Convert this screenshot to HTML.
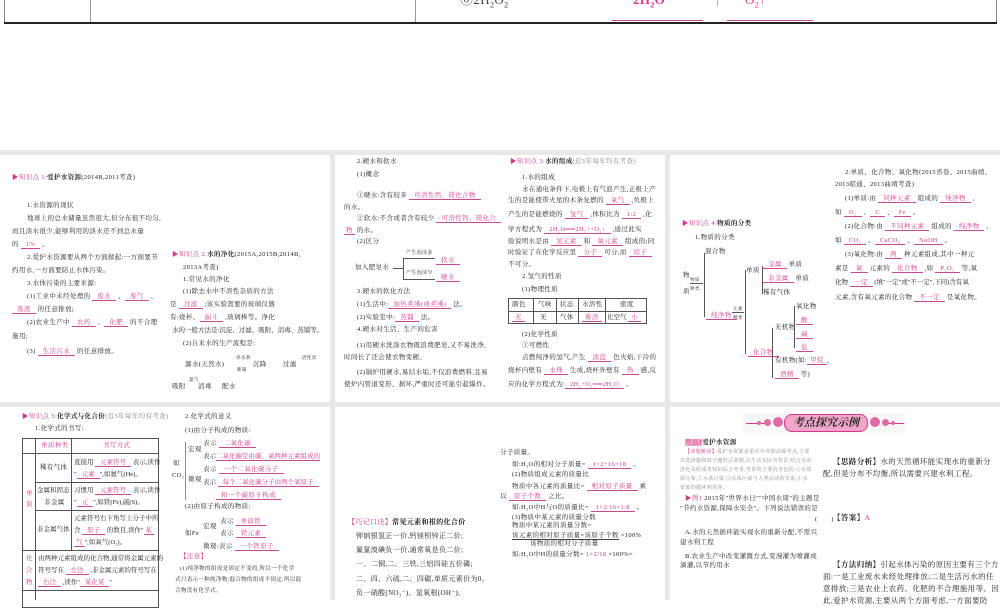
<!DOCTYPE html>
<html><head><meta charset="utf-8">
<style>
body{margin:0;width:1000px;height:600px;overflow:hidden;background:#fff;position:relative;font-family:"Liberation Serif","Noto Serif CJK SC","Noto Sans CJK SC",serif;}
.g{position:absolute;background:#e8e8e8}
.t{position:absolute;font-size:6.5px;white-space:nowrap;color:#222;line-height:8px;letter-spacing:0.35px}
.p{color:#d2388c;border-bottom:0.6px solid #c84a92;padding:0 5px}
.h{color:#d2388c}
.ln{position:absolute;background:#555}
.pk{position:absolute;background:#c84a92}
.r{font-size:7.5px!important;line-height:10px!important;letter-spacing:0.4px!important}
</style></head><body>
<div class="ln" style="left:4px;top:0;width:1px;height:23px;background:#888"></div>
<div class="ln" style="left:90px;top:0;width:1px;height:23px;background:#999"></div>
<div class="ln" style="left:415px;top:0;width:1px;height:23px;background:#999"></div>
<div class="ln" style="left:996px;top:0;width:1px;height:23px;background:#888"></div>
<div class="ln" style="left:4px;top:22px;width:993px;height:2px;background:#222"></div>
<div class="t" style="left:460px;top:-7px;font-size:13px;line-height:14px;color:#444">⑥2H<sub style="font-size:8px">2</sub>O<sub style="font-size:8px">2</sub></div>
<div class="t" style="left:633px;top:-7px;font-size:13px;line-height:14px;color:#d2388c;font-weight:bold">2H<sub style="font-size:8px">2</sub>O</div>
<div class="t" style="left:716px;top:-7px;font-size:13px;line-height:14px;color:#888">|</div>
<div class="t" style="left:745px;top:-7px;font-size:13px;line-height:14px;color:#d2388c">O<sub style="font-size:8px">2</sub>↑</div>
<div class="pk" style="left:612px;top:20px;width:91px;height:1px"></div>
<div class="pk" style="left:727px;top:20px;width:86px;height:1px"></div>

<div class="g" style="left:0;top:150px;width:1000px;height:5px"></div>
<div class="g" style="left:0;top:402px;width:1000px;height:5px"></div>
<div class="g" style="left:330px;top:150px;width:5px;height:450px"></div>
<div class="g" style="left:665px;top:150px;width:5px;height:450px"></div>

<!-- Slide 1 -->
<div class="t" style="left:12px;top:174px"><span class="h">▶知识点 1:</span><b>爱护水资源</b>(2014B,2011考查)</div>
<div class="t" style="left:27px;top:202px">1.水资源的现状</div>
<div class="t" style="left:27px;top:215px">地球上的总水储量虽然很大,但分布很不均匀,</div>
<div class="t" style="left:12px;top:228px">而且淡水很少,能够利用的淡水还不到总水量</div>
<div class="t" style="left:12px;top:241px">的 <span class="p">1%</span> 。</div>
<div class="t" style="left:27px;top:254px">2.爱护水资源要从两个方面做起:一方面要节</div>
<div class="t" style="left:12px;top:267px">约用水,一方面要防止水体污染。</div>
<div class="t" style="left:27px;top:280px">3.水体污染的主要来源:</div>
<div class="t" style="left:27px;top:293px">(1)工业中未经处理的 <span class="p">废水</span> 、<span class="p">废气</span> 、</div>
<div class="t" style="left:12px;top:306px"><span class="p">废渣</span> 的任意排放;</div>
<div class="t" style="left:27px;top:319px">(2)农业生产中 <span class="p">农药</span> 、<span class="p">化肥</span> 的不合理</div>
<div class="t" style="left:12px;top:333px">施用;</div>
<div class="t" style="left:27px;top:348px">(3) <span class="p">生活污水</span> 的任意排放。</div>
<div class="t" style="left:172px;top:251px"><span class="h">▶知识点 2:</span><b>水的净化</b>(2015A,2015B,2014B,</div>
<div class="t" style="left:183px;top:264px">2013A考查)</div>
<div class="t" style="left:183px;top:276px">1.常见水的净化</div>
<div class="t" style="left:183px;top:288px">(1)除去水中不溶性杂质的方法</div>
<div class="t" style="left:170px;top:301px">是 <span class="p">过滤</span> ;该实验需要的玻璃仪器</div>
<div class="t" style="left:170px;top:314px">有:烧杯、<span class="p">漏斗</span> ,玻璃棒等。净化</div>
<div class="t" style="left:172px;top:327px;letter-spacing:0">水的一般方法是:沉淀、过滤、吸附、消毒、蒸馏等。</div>
<div class="t" style="left:183px;top:340px">(2)自来水的生产流程是:</div>
<div class="t" style="left:185px;top:361px">源水(天然水)</div>
<div class="t" style="left:236px;top:354px;font-size:4.5px">净水剂</div>
<div class="t" style="left:237px;top:366px;font-size:4.5px">絮凝</div>
<div class="t" style="left:253px;top:361px">沉降</div>
<div class="t" style="left:283px;top:361px">过滤</div>
<div class="t" style="left:302px;top:354px;font-size:4.5px">活性炭</div>
<div class="t" style="left:172px;top:383px">吸附</div>
<div class="t" style="left:189px;top:376px;font-size:4.5px">氯气</div>
<div class="t" style="left:198px;top:383px">消毒</div>
<div class="t" style="left:222px;top:383px">配水</div>

<!-- Slide 2 -->
<div class="t" style="left:357px;top:158px">2.硬水和软水</div>
<div class="t" style="left:357px;top:171px">(1)概念</div>
<div class="t" style="left:357px;top:192px">①硬水:含有较多 <span class="p">可溶性钙、镁化合物</span></div>
<div class="t" style="left:344px;top:204px">的水。</div>
<div class="t" style="left:357px;top:215px">②软水:不含或者含有较少 <span class="p">可溶性钙、镁化合</span></div>
<div class="t" style="left:344px;top:227px"><span class="p" style="padding:0 2px">物</span> 的水。</div>
<div class="t" style="left:357px;top:238px">(2)区分</div>
<div class="t" style="left:355px;top:264px">加入肥皂水</div>
<div class="ln" style="left:393px;top:268px;width:10px;height:0.7px"></div>
<div class="ln" style="left:403px;top:258px;width:0.7px;height:21px"></div>
<div class="ln" style="left:403px;top:258px;width:32px;height:0.7px"></div>
<div class="ln" style="left:403px;top:279px;width:32px;height:0.7px"></div>
<div class="t" style="left:406px;top:250px;font-size:5px">产生泡沫多</div>
<div class="t" style="left:406px;top:270px;font-size:5px">产生泡沫少</div>
<div class="t" style="left:436px;top:257px"><span class="p">软水</span></div>
<div class="t" style="left:436px;top:274px"><span class="p">硬水</span></div>
<div class="t" style="left:357px;top:288px">3.硬水的软化方法</div>
<div class="t" style="left:357px;top:301px">(1)生活中:<span class="p">加热煮沸(或煮沸)</span> 法。</div>
<div class="t" style="left:357px;top:314px">(2)实验室中:<span class="p">蒸馏</span> 法。</div>
<div class="t" style="left:357px;top:326px">4.硬水对生活、生产的危害</div>
<div class="t" style="left:357px;top:342px">(1)用硬水洗涤衣物既浪费肥皂,又不易洗净,</div>
<div class="t" style="left:344px;top:354px">时间长了还会使衣物变硬。</div>
<div class="t" style="left:357px;top:369px">(2)锅炉用硬水,易结水垢,不仅浪费燃料,且易</div>
<div class="t" style="left:344px;top:381px">使炉内管道变形、损坏,严重时还可能引起爆炸。</div>

<div class="t" style="left:510px;top:158px"><span class="h">▶知识点 3:</span><b>水的组成</b><span style="color:#888">(近5年每年均有考查)</span></div>
<div class="t" style="left:522px;top:174px">1.水的组成</div>
<div class="t" style="left:522px;top:186px">水在通电条件下,电极上有气泡产生,正极上产</div>
<div class="t" style="left:508px;top:197px">生的是能使带火星的木条复燃的 <span class="p">氧气</span> ,负极上</div>
<div class="t" style="left:508px;top:211px">产生的是能燃烧的 <span class="p">氢气</span> ,体积比为 <span class="p">1:2</span> ,化</div>
<div class="t" style="left:508px;top:226px">学方程式为 <span class="p">2H₂O══2H₂↑+O₂↑</span> ,通过此实</div>
<div class="t" style="left:508px;top:238px">验说明水是由 <span class="p">氢元素</span> 和 <span class="p">氧元素</span> 组成的;同</div>
<div class="t" style="left:508px;top:249px">时验证了在化学反应里 <span class="p">分子</span> 可分,而 <span class="p">原子</span></div>
<div class="t" style="left:508px;top:261px">不可分。</div>
<div class="t" style="left:522px;top:273px">2.氢气的性质</div>
<div class="t" style="left:522px;top:286px">(1)物理性质</div>
<div style="position:absolute;left:508px;top:298px;width:139px;height:26px;border:0.8px solid #555;box-sizing:border-box"></div>
<div class="ln" style="left:508px;top:311px;width:139px;height:0.7px"></div>
<div class="ln" style="left:533px;top:298px;width:0.7px;height:26px"></div>
<div class="ln" style="left:556px;top:298px;width:0.7px;height:26px"></div>
<div class="ln" style="left:578px;top:298px;width:0.7px;height:26px"></div>
<div class="ln" style="left:605px;top:298px;width:0.7px;height:26px"></div>
<div class="t" style="left:512px;top:301px">颜色</div><div class="t" style="left:538px;top:301px">气味</div><div class="t" style="left:560px;top:301px">状态</div><div class="t" style="left:582px;top:301px">水溶性</div><div class="t" style="left:620px;top:301px">密度</div>
<div class="t" style="left:512px;top:314px"><span class="p" style="padding:0 3px">无</span></div><div class="t" style="left:540px;top:314px">无</div><div class="t" style="left:560px;top:314px">气体</div><div class="t" style="left:582px;top:314px"><span class="p" style="padding:0 3px">难溶</span></div><div class="t" style="left:607px;top:314px;letter-spacing:0">比空气 <span class="p" style="padding:0 3px">小</span></div>
<div class="t" style="left:522px;top:331px">(2)化学性质</div>
<div class="t" style="left:522px;top:342px">①可燃性</div>
<div class="t" style="left:522px;top:354px">点燃纯净的氢气,产生 <span class="p">淡蓝</span> 色火焰,干冷的</div>
<div class="t" style="left:508px;top:367px">烧杯内壁有 <span class="p">水珠</span> 生成,烧杯外壁有 <span class="p">热</span> 感,反</div>
<div class="t" style="left:508px;top:381px">应的化学方程式为:<span class="p">2H₂+O₂══2H₂O</span> 。</div>

<!-- Slide 3 -->
<div class="t" style="left:682px;top:220px"><span class="h">▶知识点 4:</span><b>物质的分类</b></div>
<div class="t" style="left:695px;top:234px">1.物质的分类</div>
<div class="t" style="left:705px;top:248px">混合物</div>
<div class="t" style="left:683px;top:272px">物</div><div class="t" style="left:683px;top:288px">质</div>
<div class="t" style="left:690px;top:276px;font-size:4.5px">物质</div>
<div class="ln" style="left:690px;top:283px;width:13px;height:0.6px"></div>
<div class="t" style="left:690px;top:285px;font-size:4.5px">种类</div>
<div class="ln" style="left:704px;top:253px;width:0.7px;height:64px"></div>
<div class="t" style="left:706px;top:312px"><span class="p">纯净物</span></div>
<div class="t" style="left:733px;top:305px;font-size:4.5px">元素</div>
<div class="ln" style="left:732px;top:312px;width:12px;height:0.6px"></div>
<div class="t" style="left:733px;top:314px;font-size:4.5px">种类</div>
<div class="ln" style="left:745px;top:270px;width:0.7px;height:84px"></div>
<div class="t" style="left:746px;top:267px">单质</div>
<div class="ln" style="left:762px;top:266px;width:0.7px;height:28px"></div>
<div class="t" style="left:763px;top:261px"><span class="p">金属</span> 单质</div>
<div class="t" style="left:763px;top:275px"><span class="p">非金属</span> 单质</div>
<div class="t" style="left:763px;top:289px">稀有气体</div>
<div class="t" style="left:748px;top:349px"><span class="p">化合物</span></div>
<div class="ln" style="left:772px;top:328px;width:0.7px;height:50px"></div>
<div class="t" style="left:775px;top:324px">无机物</div>
<div class="ln" style="left:794px;top:306px;width:0.7px;height:42px"></div>
<div class="t" style="left:796px;top:303px">氧化物</div>
<div class="t" style="left:796px;top:317px"><span class="p">酸</span></div>
<div class="t" style="left:796px;top:331px"><span class="p">碱</span></div>
<div class="t" style="left:796px;top:344px"><span class="p">盐</span></div>
<div class="t" style="left:775px;top:357px">有机物(如:<span class="p" style="padding:0 3px">甲烷</span>、</div>
<div class="t" style="left:775px;top:371px"><span class="p">酒精</span> 等)</div>
<div class="t" style="left:845px;top:169px">2.单质、化合物、氧化物(2015省卷、2015曲靖、</div>
<div class="t" style="left:835px;top:181px">2013昭通、2013曲靖考查)</div>
<div class="t" style="left:845px;top:195px">(1)单质:由 <span class="p">同种元素</span> 组成的 <span class="p">纯净物</span> ,</div>
<div class="t" style="left:835px;top:209px">如 <span class="p">O₂</span> 、<span class="p">C</span> 、<span class="p">Fe</span> 。</div>
<div class="t" style="left:845px;top:223px">(2)化合物:由 <span class="p">不同种元素</span> 组成的 <span class="p">纯净物</span> ,</div>
<div class="t" style="left:835px;top:237px">如 <span class="p">CO₂</span> 、<span class="p">CaCO₃</span> 、<span class="p">NaOH</span> 。</div>
<div class="t" style="left:845px;top:251px">(3)氧化物:由 <span class="p">两</span> 种元素组成,其中一种元</div>
<div class="t" style="left:835px;top:265px">素是 <span class="p">氧</span> 元素的 <span class="p">化合物</span> ,如 <span class="p">P₂O₅</span> 等,氧</div>
<div class="t" style="left:835px;top:279px;letter-spacing:0">化物 <span class="p">一定</span> (填"一定"或"不一定",下同)含有氧</div>
<div class="t" style="left:835px;top:294px">元素,含有氧元素的化合物 <span class="p">不一定</span> 是氧化物。</div>

<!-- Slide 4 -->
<div class="t" style="left:22px;top:413px"><span class="h">▶知识点 5:</span><b>化学式与化合价</b><span style="color:#888">(近5年每年均有考查)</span></div>
<div class="t" style="left:35px;top:425px">1.化学式的书写:</div>
<div style="position:absolute;left:22px;top:438px;width:137px;height:170px;border:0.8px solid #555;box-sizing:border-box"></div>
<div class="ln" style="left:35px;top:438px;width:0.7px;height:162px"></div>
<div class="ln" style="left:71px;top:438px;width:0.7px;height:112px"></div>
<div class="ln" style="left:22px;top:453px;width:137px;height:0.7px"></div>
<div class="ln" style="left:35px;top:482px;width:124px;height:0.7px"></div>
<div class="ln" style="left:35px;top:510px;width:124px;height:0.7px"></div>
<div class="ln" style="left:22px;top:550px;width:137px;height:0.7px"></div>
<div class="ln" style="left:22px;top:590px;width:137px;height:1px"></div>
<div class="t h" style="left:41px;top:442px">单质种类</div>
<div class="t h" style="left:103px;top:442px">书写方式</div>
<div class="t h" style="left:26px;top:488px;line-height:11px;white-space:normal;width:8px">单<br>质</div>
<div class="t" style="left:40px;top:464px">稀有气体</div>
<div class="t" style="left:74px;top:459px;letter-spacing:0">直接用 <span class="p">元素符号</span> 表示,读作</div>
<div class="t" style="left:74px;top:471px;letter-spacing:0">"<span class="p">元素</span>",如氦气(He)。</div>
<div class="t" style="left:37px;top:487px;letter-spacing:0">金属和固态</div>
<div class="t" style="left:44px;top:499px">非金属</div>
<div class="t" style="left:74px;top:487px;letter-spacing:0">习惯用 <span class="p">元素符号</span> 表示,读作</div>
<div class="t" style="left:74px;top:499px;letter-spacing:0">"<span class="p">元</span>",如铁(Fe),硫(S)。</div>
<div class="t" style="left:37px;top:526px;letter-spacing:0">非金属气体</div>
<div class="t" style="left:74px;top:515px;letter-spacing:0">元素符号右下角写上分子中所</div>
<div class="t" style="left:74px;top:527px;letter-spacing:0">含 <span class="p">原子</span> 的数目,读作"<span class="p" style="padding:0 2px">某</span></div>
<div class="t" style="left:74px;top:539px;letter-spacing:0"><span class="p" style="padding:0 2px">气</span>",如氧气(O₂)。</div>
<div class="t h" style="left:26px;top:553px;line-height:12px;white-space:normal;width:8px">化<br>合<br>物</div>
<div class="t" style="left:38px;top:555px;letter-spacing:0">由两种元素组成的化合物,通常将金属元素的</div>
<div class="t" style="left:38px;top:567px;letter-spacing:0">符号写在 <span class="p">左边</span> ,非金属元素的符号写在</div>
<div class="t" style="left:38px;top:579px;letter-spacing:0"><span class="p">右边</span> ,读作"<span class="p">某化某</span>"</div>

<div class="t" style="left:185px;top:413px">2.化学式的意义</div>
<div class="t" style="left:185px;top:427px">(1)由分子构成的物质:</div>
<div class="t" style="left:173px;top:460px">如</div>
<div class="t" style="left:172px;top:472px">CO₂</div>
<div class="ln" style="left:185px;top:442px;width:0.7px;height:58px;background:#888"></div>
<div class="t" style="left:188px;top:446px">宏观</div>
<div class="t" style="left:188px;top:476px">微观</div>
<div class="t" style="left:203px;top:440px">表示 <span class="p">二氧化碳</span></div>
<div class="t" style="left:203px;top:453px;letter-spacing:0">表示<span class="p" style="padding:0">二氧化碳是由碳、氧两种元素组成的</span></div>
<div class="t" style="left:203px;top:466px">表示 <span class="p">一个二氧化碳分子</span></div>
<div class="t" style="left:203px;top:479px;letter-spacing:0">表示 <span class="p">每个二氧化碳分子由两个氧原子</span></div>
<div class="t" style="left:216px;top:492px"><span class="p">和一个碳原子构成</span></div>
<div class="t" style="left:185px;top:503px">(2)由原子构成的物质:</div>
<div class="t" style="left:185px;top:530px">如Fe</div>
<div class="t" style="left:203px;top:523px">宏观</div>
<div class="t" style="left:220px;top:518px">表示 <span class="p">单质铁</span></div>
<div class="t" style="left:220px;top:530px">表示 <span class="p">铁元素</span></div>
<div class="t" style="left:203px;top:543px">微观:表示 <span class="p">一个铁原子</span></div>
<div class="t h" style="left:180px;top:553px">【注意】</div>
<div class="t" style="left:180px;top:565px;font-size:5.5px">(1)纯净物的组成是固定不变的,所以一个化学</div>
<div class="t" style="left:175px;top:576px;font-size:5.5px">式只表示一种纯净物;混合物的组成不固定,所以混</div>
<div class="t" style="left:175px;top:587px;font-size:5.5px">合物没有化学式。</div>

<!-- Slide 5 -->
<div class="t" style="left:348px;top:518px;font-size:7px"><span class="h">【巧记口诀】</span><b>常见元素和根的化合价</b></div>
<div class="t" style="left:356px;top:532px;font-size:7px">钾钠银氢正一价,钙镁钡锌正二价;</div>
<div class="t" style="left:356px;top:546px;font-size:7px">氟氯溴碘负一价,通常氧是负二价;</div>
<div class="t" style="left:356px;top:560px;font-size:7px">一、二铜,二、三铁,三铝四硅五价磷;</div>
<div class="t" style="left:356px;top:575px;font-size:7px">二、四、六硫,二、四碳,单质元素价为0。</div>
<div class="t" style="left:356px;top:589px;font-size:7px">负一硝酸(NO₃⁻)、氢氧根(OH⁻);</div>
<div class="t" style="left:500px;top:449px">分子质量。</div>
<div class="t" style="left:512px;top:461px">如:H₂O的相对分子质量= <span class="p">1×2+16=18</span> 。</div>
<div class="t" style="left:512px;top:471px">(2)物质组成元素的质量比</div>
<div class="t" style="left:512px;top:483px">物质中各元素的质量比= <span class="p">相对原子质量</span> 乘</div>
<div class="t" style="left:500px;top:493px">以 <span class="p">原子个数</span> 之比。</div>
<div class="t" style="left:512px;top:504px">如:H₂O中H与O的质量比= <span class="p">1×2:16=1:8</span> 。</div>
<div class="t" style="left:512px;top:514px">(3)物质中某元素的质量分数</div>
<div class="t" style="left:512px;top:522px">物质中某元素的质量分数=</div>
<div class="t" style="left:512px;top:532px"><span style="border-bottom:0.6px solid #444">该元素的相对原子质量×该原子个数</span> ×100%</div>
<div class="t" style="left:530px;top:540px">该物质的相对分子质量</div>
<div class="t" style="left:512px;top:551px">如:H₂O中H的质量分数= <span class="h">1×2/18</span> ×100%=</div>

<!-- Slide 6 -->
<div style="position:absolute;left:743px;top:413px;width:162px;height:20px;background:#f7f7f7"></div>
<div class="ln" style="left:746px;top:423px;width:20px;height:0.6px;background:#d2388c"></div>
<div class="ln" style="left:884px;top:423px;width:20px;height:0.6px;background:#d2388c"></div>
<div style="position:absolute;left:757px;top:421px;width:4px;height:4px;border-radius:50%;background:#e06aa8"></div>
<div style="position:absolute;left:764px;top:419px;width:7px;height:7px;border-radius:50%;background:#e06aa8"></div>
<div style="position:absolute;left:773px;top:417px;width:10px;height:10px;border-radius:50%;background:#e06aa8"></div>
<div style="position:absolute;left:784px;top:414px;width:84px;height:18px;border-radius:8px;background:#f0a6c8;border:1px solid #d2388c;box-sizing:border-box;font-size:11px;line-height:16px;text-align:center;color:#222;font-weight:bold;font-style:italic">考点探究示例</div>
<div style="position:absolute;left:870px;top:417px;width:10px;height:10px;border-radius:50%;background:#e06aa8"></div>
<div style="position:absolute;left:882px;top:419px;width:7px;height:7px;border-radius:50%;background:#e06aa8"></div>
<div style="position:absolute;left:891px;top:421px;width:4px;height:4px;border-radius:50%;background:#e06aa8"></div>
<div class="t" style="left:685px;top:439px"><span style="background:#f0a6c8;color:#d2388c">考点1</span><b>爱护水资源</b></div>
<div class="t" style="left:685px;top:449px;font-size:5px;color:#888"><span class="h">【命题解读】</span>爱护水资源是重庆中考的高频考点,主要</div>
<div class="t" style="left:680px;top:458px;font-size:5px;color:#888">以选择题和填空题形式命题,以生活实际为背景,结合水的</div>
<div class="t" style="left:680px;top:467px;font-size:5px;color:#888">净化及组成等知识综合考查,考查的主要内容包括:①水资</div>
<div class="t" style="left:680px;top:476px;font-size:5px;color:#888">源分布,②水体污染,③水体污染与人类活动的关系,④水</div>
<div class="t" style="left:680px;top:485px;font-size:5px;color:#888">资源的循环利用等。</div>
<div class="t" style="left:685px;top:495px"><span class="h">▶例1</span> 2015年"世界水日""中国水周"的主题是</div>
<div class="t" style="left:680px;top:505px">"节约水资源,保障水安全"。下列说法错误的是</div>
<div class="t" style="left:815px;top:516px">(　　)</div>
<div class="t" style="left:685px;top:529px">A.水的天然循环能实现水的重新分配,不需兴</div>
<div class="t" style="left:680px;top:539px">建水利工程</div>
<div class="t" style="left:685px;top:553px">B.农业生产中改变灌溉方式,变漫灌为喷灌或</div>
<div class="t" style="left:680px;top:562px">滴灌,以节约用水</div>
<div class="t r" style="left:833px;top:457px"><b>【思路分析】</b>水的天然循环能实现水的重新分</div>
<div class="t r" style="left:823px;top:469px">配,但是分布不均衡,所以需要兴建水利工程。</div>
<div class="t r" style="left:833px;top:513px"><b>【答案】</b><span class="h">A</span></div>
<div class="t r" style="left:833px;top:560px"><b>【方法归纳】</b>引起水体污染的原因主要有三个方</div>
<div class="t r" style="left:823px;top:572px">面:一是工业废水未经处理排放;二是生活污水的任</div>
<div class="t r" style="left:823px;top:584px">意排放;三是农业上农药、化肥的不合理施用等。因</div>
<div class="t r" style="left:823px;top:596px">此,爱护水资源,主要从两个方面考虑,一方面要防</div>
</body></html>
